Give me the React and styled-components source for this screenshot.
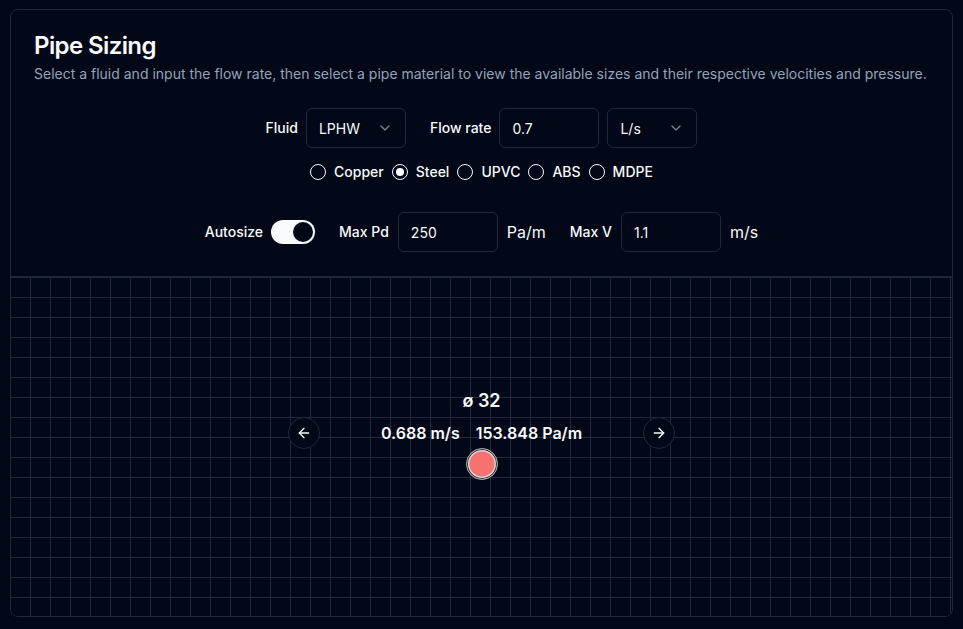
import React, { useState } from "react";
import styled, { createGlobalStyle } from "styled-components";
import { ChevronDown, ArrowLeft, ArrowRight } from "lucide-react";

const Global = createGlobalStyle`
  html, body { margin: 0; padding: 0; background: #020817; }
  body { font-family: Inter, "Noto Sans", sans-serif; color: #f8fafc; -webkit-font-smoothing: antialiased; }
  * { box-sizing: border-box; }
`;

const Page = styled.div`
  padding: 9px 10px 12px 10px;
  background: #020817;
  min-height: 629px;
`;

const Card = styled.div`
  border: 1px solid #1e293b;
  border-radius: 8px;
  background: #020817;
  display: flex;
  flex-direction: column;
  overflow: hidden;
`;

const Header = styled.div`
  padding: 24px 24px 0 23px;
  display: flex;
  flex-direction: column;
  gap: 6px;
`;

const Title = styled.h1`
  margin: 0;
  font-size: 24px;
  line-height: 24px;
  font-weight: 600;
  letter-spacing: -0.6px;
  color: #f8fafc;
`;

const Subtitle = styled.p`
  margin: 0;
  font-size: 14px;
  line-height: 20px;
  color: #94a3b8;
`;

const Content = styled.div`
  padding: 24px 24px 24px;
  display: flex;
  flex-direction: column;
  align-items: center;
`;

const Row = styled.div`
  display: flex;
  align-items: center;
  justify-content: center;
  gap: ${(p) => p.$gap || 24}px;
  margin-top: ${(p) => p.$mt || 0}px;
`;

const Group = styled.div`
  display: flex;
  align-items: center;
  gap: ${(p) => p.$gap || 8}px;
`;

const Label = styled.span`
  font-size: 14px;
  line-height: 20px;
  font-weight: 500;
  color: #f8fafc;
`;

const Unit = styled.span`
  font-size: 16px;
  line-height: 24px;
  color: #f8fafc;
`;

const SelectBox = styled.div`
  width: ${(p) => p.$w}px;
  height: 40px;
  border: 1px solid #1e293b;
  border-radius: 6px;
  padding: 0 12px;
  display: flex;
  align-items: center;
  justify-content: space-between;
  font-size: 14px;
  color: #f8fafc;
  svg { opacity: 0.5; }
`;

const Input = styled.input`
  width: 100px;
  height: 40px;
  border: 1px solid #1e293b;
  border-radius: 6px;
  padding: 0 12px;
  background: #020817;
  color: #f8fafc;
  font-family: Inter, sans-serif;
  font-size: 14px;
  outline: none;
`;

const RadioItem = styled.label`
  display: flex;
  align-items: center;
  gap: 8px;
  font-size: 14px;
  font-weight: 500;
  line-height: 16px;
`;

const RadioCircle = styled.span`
  width: 16px;
  height: 16px;
  border-radius: 50%;
  border: 1px solid #f8fafc;
  display: flex;
  align-items: center;
  justify-content: center;
  &::after {
    content: "";
    width: 8px;
    height: 8px;
    border-radius: 50%;
    background: #f8fafc;
    display: ${(p) => (p.$checked ? "block" : "none")};
  }
`;

const Switch = styled.button`
  width: 44px;
  height: 24px;
  border-radius: 12px;
  border: 2px solid transparent;
  background: ${(p) => (p.$on ? "#f8fafc" : "#1e293b")};
  padding: 0;
  display: flex;
  align-items: center;
  cursor: pointer;
  &::after {
    content: "";
    width: 20px;
    height: 20px;
    border-radius: 50%;
    background: #020817;
    transform: translateX(${(p) => (p.$on ? 20 : 0)}px);
  }
`;

const Canvas = styled.div`
  border-top: 1px solid #1e293b;
  height: 340px;
  background-color: #020817;
  background-image:
    linear-gradient(to right, #1e293b 1px, transparent 1px),
    linear-gradient(to bottom, #1e293b 1px, transparent 1px);
  background-size: 20px 20px;
  background-position: 19px 0;
  display: flex;
  flex-direction: column;
  align-items: center;
  padding-top: 110px;
`;

const SizeLabel = styled.div`
  font-size: 18px;
  line-height: 28px;
  font-weight: 600;
  color: #f8fafc;
`;

const StatsRow = styled.div`
  display: flex;
  align-items: center;
  gap: 61px;
  margin-top: 2px;
`;

const Stats = styled.div`
  display: flex;
  gap: 16px;
  font-size: 16px;
  line-height: 24px;
  font-weight: 600;
  color: #f8fafc;
`;

const NavButton = styled.button`
  width: 32px;
  height: 32px;
  border-radius: 50%;
  border: 1px solid #1e293b;
  background: #020817;
  color: #f8fafc;
  display: flex;
  align-items: center;
  justify-content: center;
  padding: 0;
  cursor: pointer;
`;

const Pipe = styled.div`
  width: 32px;
  height: 32px;
  border-radius: 50%;
  margin-top: -1px;
  background: #f87171;
  border: 1.5px solid #a1a1aa;
  box-shadow: inset 0 0 0 1px #27272a, inset 0 0 0 2.5px #d4d4d8;
`;

const materials = ["Copper", "Steel", "UPVC", "ABS", "MDPE"];

export default function App() {
  const [material, setMaterial] = useState("Steel");
  const [auto, setAuto] = useState(true);
  return (
    <Page>
      <Global />
      <Card>
        <Header>
          <Title>Pipe Sizing</Title>
          <Subtitle>
            Select a fluid and input the flow rate, then select a pipe material to view the available sizes and their respective velocities and pressure.
          </Subtitle>
        </Header>
        <Content>
          <Row $gap={24}>
            <Group>
              <Label>Fluid</Label>
              <SelectBox $w={100}>
                <span>LPHW</span>
                <ChevronDown size={16} />
              </SelectBox>
            </Group>
            <Group>
              <Label>Flow rate</Label>
              <Input defaultValue="0.7" />
              <SelectBox $w={90}>
                <span>L/s</span>
                <ChevronDown size={16} />
              </SelectBox>
            </Group>
          </Row>
          <Row $gap={8} $mt={16}>
            {materials.map((m) => (
              <RadioItem key={m} onClick={() => setMaterial(m)}>
                <RadioCircle $checked={material === m} />
                {m}
              </RadioItem>
            ))}
          </Row>
          <Row $gap={24} $mt={32}>
            <Group>
              <Label>Autosize</Label>
              <Switch $on={auto} onClick={() => setAuto(!auto)} />
            </Group>
            <Group $gap={9}>
              <Label>Max Pd</Label>
              <Input defaultValue="250" />
              <Unit>Pa/m</Unit>
            </Group>
            <Group $gap={9}>
              <Label>Max V</Label>
              <Input defaultValue="1.1" />
              <Unit>m/s</Unit>
            </Group>
          </Row>
        </Content>
        <Canvas>
          <SizeLabel>ø 32</SizeLabel>
          <StatsRow>
            <NavButton aria-label="previous">
              <ArrowLeft size={16} />
            </NavButton>
            <Stats>
              <span>0.688 m/s</span>
              <span>153.848 Pa/m</span>
            </Stats>
            <NavButton aria-label="next">
              <ArrowRight size={16} />
            </NavButton>
          </StatsRow>
          <Pipe />
        </Canvas>
      </Card>
    </Page>
  );
}
